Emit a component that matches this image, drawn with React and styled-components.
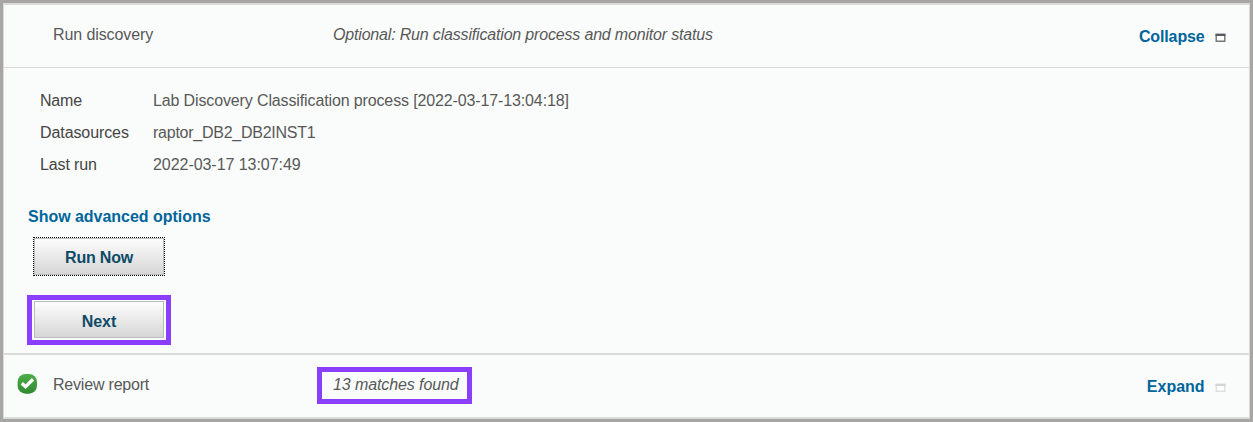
import React from "react";
import styled, { createGlobalStyle } from "styled-components";

const GlobalStyle = createGlobalStyle`
  *, *::before, *::after { box-sizing: border-box; }
  body {
    margin: 0;
    overflow: hidden;
    font-family: "Liberation Sans", Arial, sans-serif;
    font-size: 16px;
    line-height: 18px;
    color: #585858;
  }
`;

const Frame = styled.div`
  width: 1253px;
  height: 422px;
  border: 3px solid #a8a5a5;
`;

const Panel = styled.main`
  display: flex;
  flex-direction: column;
  height: 416px;
  background: #fafcfb;
  border: solid #d9dbda;
  border-width: 2px 1px;
`;

const StepHeader = styled.header`
  display: flex;
  align-items: flex-start;
  height: 62px;
  padding: 21px 23px 0 13px;
`;

const StatusSlot = styled.div`
  width: 36px;
  height: 20px;

  svg {
    display: block;
    margin-top: -3px;
  }
`;

const StepTitle = styled.div`
  width: 280px;
  letter-spacing: ${(p) => p.$track}px;
`;

const StepNote = styled.div`
  flex: 1;
  font-style: italic;
  letter-spacing: ${(p) => p.$track}px;
`;

const Toggle = styled.a`
  display: flex;
  align-items: center;
  padding-top: 2px;
  gap: 10.4px;
  font-weight: bold;
  letter-spacing: ${(p) => p.$track}px;
  color: #00659b;

  svg { margin-top: 2px; }
`;

const StepBody = styled.section`
  height: 288px;
  padding: 24px 24px 0;
  border-top: 1px solid #d9dbda;
  border-bottom: 2px solid #d9dbda;
`;

const Details = styled.dl`
  display: grid;
  grid-template-columns: 113px 1fr;
  row-gap: 14px;
  margin: 0 0 34px 12px;
`;

const Label = styled.dt`
  color: #444444;
  letter-spacing: ${(p) => p.$track}px;
`;

const Value = styled.dd`
  margin: 0;
  letter-spacing: ${(p) => p.$track}px;
`;

const AdvancedLink = styled.a`
  display: block;
  font-weight: bold;
  letter-spacing: -0.03px;
  color: #00659b;
`;

const Button = styled.button`
  display: block;
  width: 130px;
  height: 37px;
  margin: ${(p) => p.$top}px 0 0 6px;
  padding: ${(p) => p.$padTop}px 0 0;
  border: 1px solid #bbbbbb;
  outline: ${(p) => (p.$focused ? "1px dotted #000000" : "none")};
  background: linear-gradient(#fdfdfd, #d6d6d6);
  color: #0d4a66;
  font: bold 16px/18px "Liberation Sans", Arial, sans-serif;
  letter-spacing: ${(p) => p.$track}px;
`;

const Highlighted = styled.div`
  position: relative;
  width: max-content;

  &::after {
    content: "";
    position: absolute;
    inset: ${(p) => p.$inset};
    border: 5px solid #8a3ffc;
    pointer-events: none;
  }
`;

function CheckIcon() {
  return (
    <svg width="22" height="22" viewBox="0 0 22 22">
      <defs>
        <linearGradient id="ok" x1="0" y1="0" x2="0" y2="1">
          <stop offset="0" stopColor="#4fae48" />
          <stop offset="1" stopColor="#2f8a30" />
        </linearGradient>
      </defs>
      <rect x="0.6" y="0.9" width="19.4" height="19.8" rx="8" fill="url(#ok)" />
      <path d="M4.8 10.2L8.6 13.7L16 6.2" fill="none" stroke="#ffffff" strokeWidth="3.4" />
    </svg>
  );
}

function WindowIcon({ color, frame }) {
  return (
    <svg width="11" height="10" viewBox="0 0 11 10">
      <path d="M1.2 2V8.3H9.8V2Z" fill="#ffffff" stroke={frame} strokeWidth="1.4" />
      <path d="M0.5 0.6H10.5V3H0.5Z" fill={color} />
    </svg>
  );
}

export default function App() {
  return (
    <>
      <GlobalStyle />
      <Frame>
        <Panel>
          <StepHeader>
            <StatusSlot />
            <StepTitle $track={-0.1}>Run discovery</StepTitle>
            <StepNote $track={-0.175}>Optional: Run classification process and monitor status</StepNote>
            <Toggle $track={-0.12}>
              Collapse
              <WindowIcon color="#555c64" frame="#70767d" />
            </Toggle>
          </StepHeader>
          <StepBody>
            <Details>
              <Label $track={-0.2}>Name</Label>
              <Value $track={-0.13}>Lab Discovery Classification process [2022-03-17-13:04:18]</Value>
              <Label $track={-0.09}>Datasources</Label>
              <Value $track={-0.25}>raptor_DB2_DB2INST1</Value>
              <Label $track={-0.12}>Last run</Label>
              <Value $track={-0.05}>2022-03-17 13:07:49</Value>
            </Details>
            <AdvancedLink>Show advanced options</AdvancedLink>
            <Button $top={12} $padTop={2} $track={-0.2} $focused>Run Now</Button>
            <Highlighted $inset="-6px -7px -7px -1px">
              <Button $top={26} $padTop={4} $track={-0.05}>Next</Button>
            </Highlighted>
          </StepBody>
          <StepHeader>
            <StatusSlot>
              <CheckIcon />
            </StatusSlot>
            <StepTitle $track={-0.2}>Review report</StepTitle>
            <StepNote $track={-0.1}>
              <Highlighted $inset="-9px -13px -10px -16px">13 matches found</Highlighted>
            </StepNote>
            <Toggle $track={0}>
              Expand
              <WindowIcon color="#d4d6d5" frame="#dddfde" />
            </Toggle>
          </StepHeader>
        </Panel>
      </Frame>
    </>
  );
}
